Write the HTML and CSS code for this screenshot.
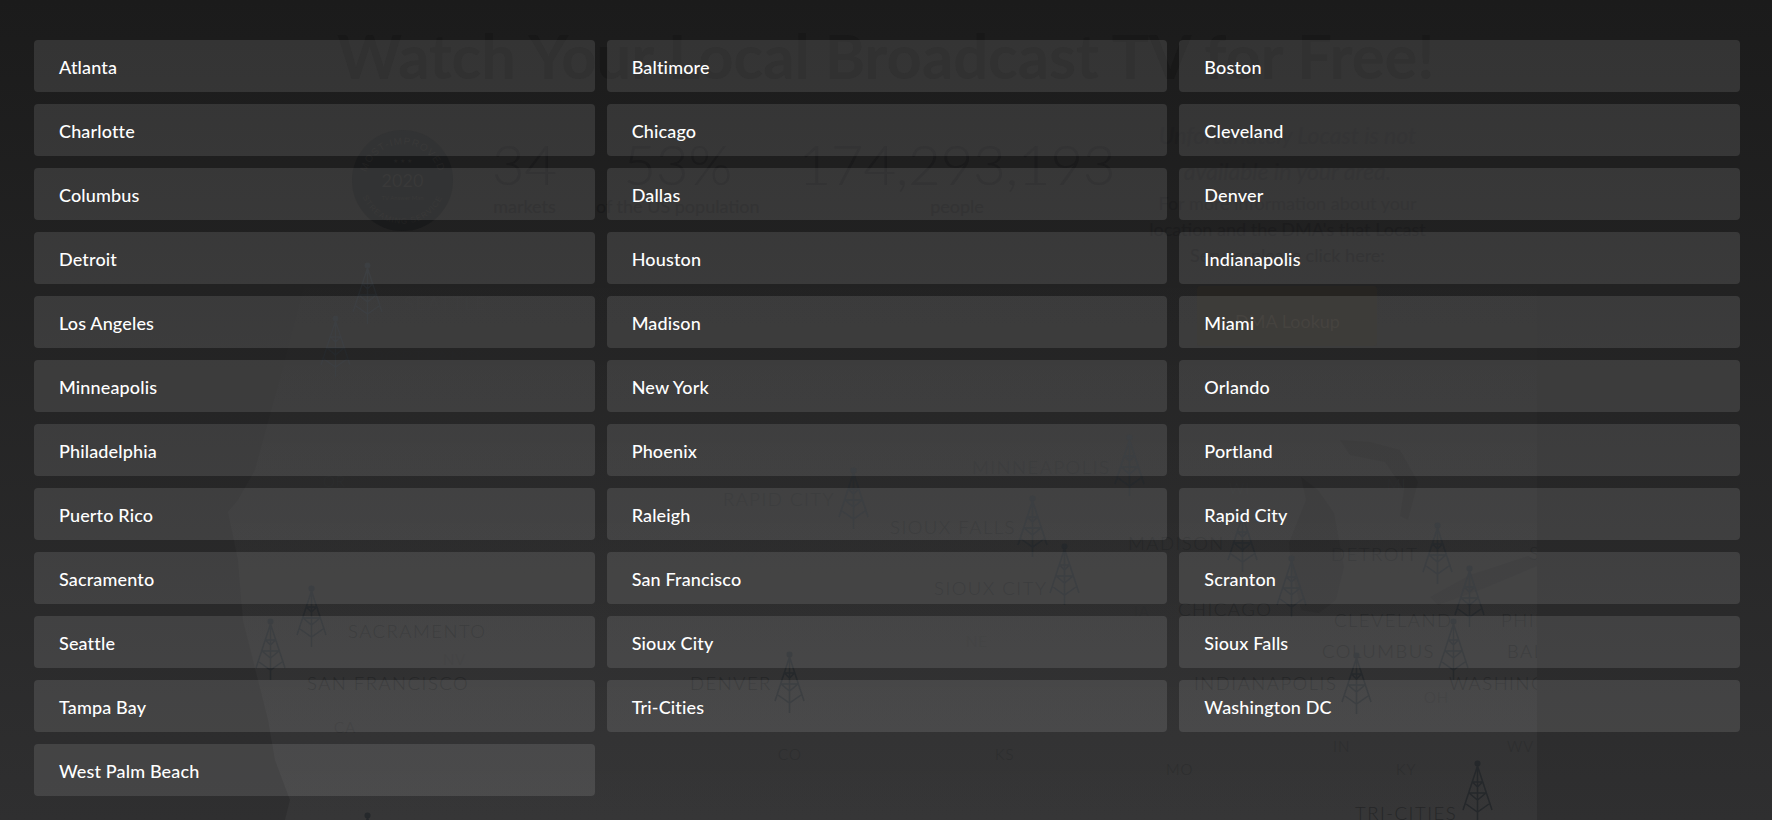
FILE: index.html
```html
<!DOCTYPE html>
<html lang="en">
<head>
<meta charset="utf-8">
<title>Locast markets</title>
<link rel="stylesheet" href="styles.css">
</head>
<body>
<div class="under">
  <svg class="map" width="1537" height="820" viewBox="0 0 1537 820" aria-hidden="true">
    <defs>
      <linearGradient id="landfill" x1="0" y1="250" x2="0" y2="820" gradientUnits="userSpaceOnUse">
        <stop offset="0" stop-color="#fff" stop-opacity="0"/>
        <stop offset="1" stop-color="#fff" stop-opacity="0.034"/>
      </linearGradient>
      <g id="tower" class="tower">
        <circle cx="15.5" cy="3.5" r="3" class="tower-dot"/>
        <path d="M15.5 6V62M15.5 6L1 50M15.5 6L30 50M10.5 22H20.5M7 33H24M7 33L15.5 40L24 33M4 44L15.5 52L27 44M10.5 22L15.5 27L20.5 22"/>
      </g>
    </defs>
    <path class="land" d="M318 250L303 290L285 360L255 470L238 500L228 512L238 560L243 620L258 680L268 720L275 760L290 800L285 820H1537V250Z"/>
    <path class="lake" d="M1301 477L1318 490L1334 513L1344 567L1336 600L1319 613L1301 610L1291 567L1289 543L1306 500Z"/>
    <path class="lake" d="M1340 440L1370 442L1400 450L1418 482L1408 520L1400 516L1404 490L1385 462L1350 455Z"/>
    <path class="lake" d="M1430 597L1470 575L1528 556L1537 560V566L1480 590L1438 605Z"/>

    <use href="#tower" x="352" y="262"/><text class="city" x="404" y="310">SEATTLE</text>
    <use href="#tower" x="320" y="315"/><text class="city" x="373" y="364">PORTLAND</text>
    <use href="#tower" x="296" y="585"/><text class="city" x="348" y="638">SACRAMENTO</text>
    <use href="#tower" x="255" y="618"/><text class="city" x="307" y="690">SAN FRANCISCO</text>
    <use href="#tower" x="352" y="812"/>
    <use href="#tower" x="838" y="467"/><text class="city" x="723" y="506">RAPID CITY</text>
    <use href="#tower" x="1114" y="434"/><text class="city" x="972" y="474">MINNEAPOLIS</text>
    <use href="#tower" x="1017" y="495"/><text class="city" x="890" y="534">SIOUX FALLS</text>
    <use href="#tower" x="1049" y="543"/><text class="city" x="934" y="595">SIOUX CITY</text>
    <use href="#tower" x="774" y="651"/><text class="city" x="690" y="690">DENVER</text>
    <use href="#tower" x="1227" y="510"/><text class="city" x="1128" y="550">MADISON</text>
    <use href="#tower" x="1276" y="555"/><text class="city" x="1178" y="616">CHICAGO</text>
    <use href="#tower" x="1422" y="522"/><text class="city" x="1331" y="561">DETROIT</text>
    <use href="#tower" x="1454" y="565"/><text class="city" x="1334" y="627">CLEVELAND</text>
    <use href="#tower" x="1438" y="618"/><text class="city" x="1322" y="658">COLUMBUS</text>
    <use href="#tower" x="1341" y="652"/><text class="city" x="1194" y="690">INDIANAPOLIS</text>
    <use href="#tower" x="1462" y="760"/><text class="city" x="1355" y="820">TRI-CITIES</text>
    <text class="city" x="1501" y="627">PHILADELPHIA</text>
    <text class="city" x="1507" y="658">BALTIMORE</text>
    <text class="city" x="1449" y="690">WASHINGTON DC</text>
    <text class="city" x="1529" y="560">SCRANTON</text>

    <text class="state" x="323" y="487">OR</text>
    <text class="state" x="443" y="665">NV</text>
    <text class="state" x="334" y="733">CA</text>
    <text class="state" x="1387" y="490">MI</text>
    <text class="state" x="1229" y="494">WI</text>
    <text class="state" x="730" y="563">WY</text>
    <text class="state" x="778" y="760">CO</text>
    <text class="state" x="995" y="760">KS</text>
    <text class="state" x="1166" y="775">MO</text>
    <text class="state" x="966" y="647">NE</text>
    <text class="state" x="1134" y="617">IA</text>
    <text class="state" x="1424" y="703">OH</text>
    <text class="state" x="1333" y="752">IN</text>
    <text class="state" x="1507" y="752">WV</text>
    <text class="state" x="1396" y="775">KY</text>
  </svg>

  <h1 class="title">Watch Your Local Broadcast TV for Free!</h1>
  <div class="summary">
    <svg class="badge" width="101" height="101" viewBox="0 0 101 101" aria-hidden="true">
      <defs>
        <path id="arc-top" d="M13 52A37.5 37.5 0 0 1 88 52"/>
        <path id="arc-bottom" d="M9 62A43 43 0 0 0 92 62"/>
      </defs>
      <circle cx="50.5" cy="50.5" r="50.5" class="badge-disc"/>
      <text class="badge-arc"><textPath href="#arc-top" startOffset="50%">MOST-IMPROVED</textPath></text>
      <text class="badge-arc badge-arc-low"><textPath href="#arc-bottom" startOffset="50%">STREAMING SERVICE</textPath></text>
      <text class="badge-stars" x="50.5" y="33">★ ★ ★</text>
      <text class="badge-year" x="50.5" y="57">2020</text>
      <text class="badge-by" x="50.5" y="70">TV Answer Man</text>
    </svg>
    <div class="stat">
      <div class="stat-num">34</div>
      <div class="stat-label">markets</div>
    </div>
    <div class="stat">
      <div class="stat-num">53%</div>
      <div class="stat-label">of the US population</div>
    </div>
    <div class="stat">
      <div class="stat-num">174,293,193</div>
      <div class="stat-label">people</div>
    </div>
    <div class="notice">
      <p class="notice-lead">Unfortunately Locast is not available in your area.</p>
      <p class="notice-body">For more information about your location and the DMA's that Locast Serves, please click here:</p>
      <div class="lookup">DMA Lookup</div>
    </div>
  </div>
</div>

<div class="overlay">
  <a class="market">Atlanta</a>
  <a class="market">Baltimore</a>
  <a class="market">Boston</a>
  <a class="market">Charlotte</a>
  <a class="market">Chicago</a>
  <a class="market">Cleveland</a>
  <a class="market">Columbus</a>
  <a class="market">Dallas</a>
  <a class="market">Denver</a>
  <a class="market">Detroit</a>
  <a class="market">Houston</a>
  <a class="market">Indianapolis</a>
  <a class="market">Los Angeles</a>
  <a class="market">Madison</a>
  <a class="market">Miami</a>
  <a class="market">Minneapolis</a>
  <a class="market">New York</a>
  <a class="market">Orlando</a>
  <a class="market">Philadelphia</a>
  <a class="market">Phoenix</a>
  <a class="market">Portland</a>
  <a class="market">Puerto Rico</a>
  <a class="market">Raleigh</a>
  <a class="market">Rapid City</a>
  <a class="market">Sacramento</a>
  <a class="market">San Francisco</a>
  <a class="market">Scranton</a>
  <a class="market">Seattle</a>
  <a class="market">Sioux City</a>
  <a class="market">Sioux Falls</a>
  <a class="market">Tampa Bay</a>
  <a class="market">Tri-Cities</a>
  <a class="market">Washington DC</a>
  <a class="market">West Palm Beach</a>
</div>
</body>
</html>
```

FILE: styles.css
```css
* { box-sizing: border-box; }

html, body {
  margin: 0;
  height: 820px;
  overflow: hidden;
}

body {
  position: relative;
  width: 1772px;
  font-family: Lato, "Liberation Sans", sans-serif;
  background: linear-gradient(180deg, #1b1b1b 0%, #2f2f30 100%);
}

/* Dimmed page beneath the market picker */
.under {
  position: relative;
  height: 820px;
  padding-top: 22px;
}

.map {
  position: absolute;
  left: 0;
  top: 0;
}

.land { fill: url(#landfill); }
.lake { fill: #000; fill-opacity: 0.06; }

.tower path {
  fill: none;
  stroke: #25282b;
  stroke-width: 1.5;
}
.tower-dot { fill: #25282b; }

.city {
  font-family: Lato, sans-serif;
  font-weight: 300;
  font-size: 18.5px;
  letter-spacing: 1.5px;
  fill: #252627;
}

.state {
  font-family: Lato, sans-serif;
  font-weight: 300;
  font-size: 15px;
  letter-spacing: 1px;
  fill: #2c2d2e;
}

.title {
  position: relative;
  margin: 0;
  text-align: center;
  font-size: 61.5px;
  line-height: 66px;
  font-weight: 700;
  color: #181818;
}

.summary {
  position: relative;
  display: flex;
  align-items: flex-start;
  gap: 39px;
  padding-left: 352px;
  margin-top: 42px;
}

.badge { flex: none; }
.badge-disc { fill: #191a1b; }
.badge-arc {
  font-family: "Liberation Sans", sans-serif;
  font-size: 10px;
  letter-spacing: 1px;
  text-anchor: middle;
  fill: #212121;
}
.badge-arc-low { font-size: 8px; }
.badge-stars { font-size: 6px; text-anchor: middle; fill: #212121; }
.badge-year { font-family: Lato, sans-serif; font-size: 18px; text-anchor: middle; fill: #212121; }
.badge-by { font-family: Lato, sans-serif; font-size: 6px; text-anchor: middle; fill: #212121; }

.stat {
  flex: none;
  margin-top: 3px;
  text-align: center;
  color: #1a1a1b;
}

.stat-num {
  font-size: 56px;
  font-weight: 300;
  line-height: 62px;
}

.stat-label {
  font-size: 18px;
  line-height: 22px;
}

.notice {
  flex: none;
  width: 300px;
  margin: -13px 0 0 -17px;
  text-align: center;
  color: #1c1c1d;
}

.notice-lead {
  margin: 0;
  font-size: 23px;
  font-style: italic;
  line-height: 36px;
}

.notice-body {
  margin: 1px 0 0;
  font-size: 18px;
  line-height: 26px;
}

.lookup {
  width: 180px;
  height: 60px;
  margin: 18px auto 0;
  padding-top: 10px;
  display: flex;
  align-items: center;
  justify-content: center;
  border-radius: 3px;
  background: #262421;
  color: #2f2c28;
  font-size: 18px;
}

/* Market picker layer */
.overlay {
  position: absolute;
  inset: 0;
  padding: 40px 32px 0 34px;
  display: grid;
  grid-template-columns: repeat(3, 1fr);
  grid-auto-rows: 52px;
  gap: 12px;
}

.market {
  display: flex;
  align-items: center;
  padding: 2px 25px 0;
  border-radius: 4px;
  background: rgba(255, 255, 255, 0.11);
  color: #fff;
  font-size: 18px;
  font-weight: 500;
  letter-spacing: 0.15px;
}
```
